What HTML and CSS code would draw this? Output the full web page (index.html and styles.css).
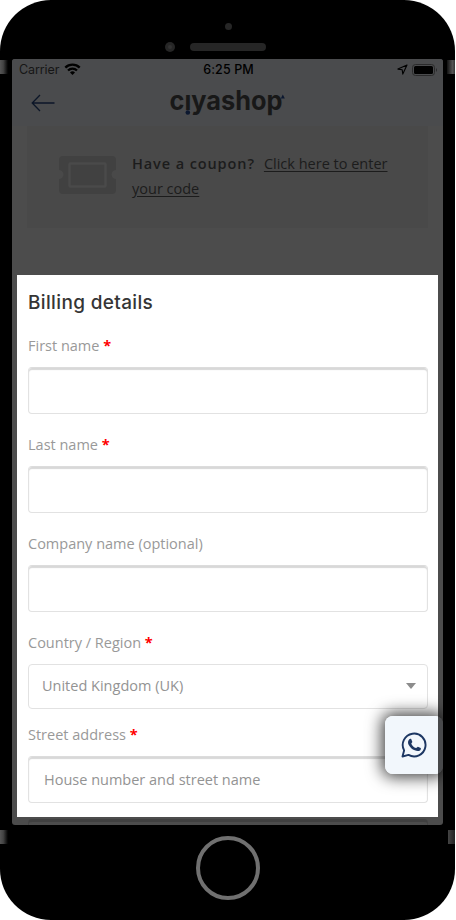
FILE: index.html
```html
<!DOCTYPE html>
<html lang="en">
<head>
<meta charset="utf-8">
<title>Billing details</title>
<link rel="stylesheet" href="styles.css">
</head>
<body>
<div class="phone">
  <i class="band band-tl"></i><i class="band band-tr"></i><i class="band band-bl"></i><i class="band band-br"></i>
  <div class="top">
    <svg width="455" height="59" viewBox="0 0 455 59">
      <circle cx="228.500" cy="26.500" r="3.500" fill="#262626"/>
      <circle cx="170" cy="47" r="5" fill="#262626"/><circle cx="170" cy="47" r="2" fill="#333"/>
      <rect x="190" y="43" width="76" height="8" rx="4" fill="#262626"/>
    </svg>
  </div>
  <div class="screen">
    <div class="status">
      <div class="carrier"><span>Carrier</span>
        <svg width="17" height="13" viewBox="0 0 17 13" fill="none" stroke="#000" stroke-width="2.300"><path d="M1.300 4.600a10.200 10.200 0 0 1 14.400 0M4 7.500a6.400 6.400 0 0 1 9 0"/><path d="M8.500 12 6 9.500a3.600 3.600 0 0 1 5 0z" fill="#000" stroke="none"/></svg>
      </div>
      <div class="time">6:25 PM</div>
      <div class="power">
        <svg width="11" height="11" viewBox="0 0 11 11" fill="none" stroke="#000" stroke-width="1.100" stroke-linejoin="round"><path d="M10 1 .9 5.100l4.300.6.6 4.400z"/></svg>
        <svg width="26" height="12" viewBox="0 0 26 12"><rect x=".5" y=".5" width="22" height="11" rx="3" fill="none" stroke="#2a2a2b"/><rect x="2" y="2" width="19" height="8" rx="1.500"/><path d="M24 4q2 2 0 4z" fill="#2a2a2b"/></svg>
      </div>
    </div>
    <div class="header">
      <svg class="back" width="24" height="18" viewBox="0 0 24 18" fill="none" stroke="#0c1628" stroke-width="1.300"><path d="M23.500 9H1.200M9 1 1.200 9 9 17"/></svg>
      <svg class="logo" width="122" height="46" viewBox="0 0 122 46">
        <text x=".5" y="29.500" textLength="113" lengthAdjust="spacingAndGlyphs" class="logo-text">cıyashop</text>
        <circle cx="18.800" cy="32.500" r="2.300" fill="#0c1830"/>
        <path d="m113.800 14.500 2 4h-4z" fill="#0c1830"/>
      </svg>
    </div>
    <div class="coupon">
      <svg class="ticket" width="57" height="38" viewBox="0 0 57 38"><path d="M4 0h49q4 0 4 4v10a4.500 4.500 0 0 0 0 9v11q0 4-4 4H4q-4 0-4-4V23a4.500 4.500 0 0 0 0-9V4q0-4 4-4z" fill="#414141"/><rect x="10.500" y="7.500" width="36" height="23" rx="1" fill="none" stroke="#4a4a4a" stroke-width="2.500"/></svg>
      <p><span class="ask">Have a coupon?</span><a>Click here to enter</a><br><a>your code</a></p>
    </div>
    <div class="panel">
      <h1>Billing details</h1>
      <div class="field"><label>First name <b>*</b></label><div class="input"></div></div>
      <div class="field"><label>Last name <b>*</b></label><div class="input"></div></div>
      <div class="field"><label>Company name (optional)</label><div class="input"></div></div>
      <div class="field country"><label>Country / Region <b>*</b></label><div class="select"><span>United Kingdom (UK)</span><i></i></div></div>
      <div class="field"><label>Street address <b>*</b></label><div class="input"><span class="street">House number and street name</span></div></div>
    </div>
    <div class="next"></div>
    <div class="chat">
      <svg width="26" height="26" viewBox="0 0 26 26"><path d="M1.500 24.500 3.100 18.400A11.400 11.400 0 1 1 7.500 22.900z" fill="none" stroke="#1d3763" stroke-width="1.900" stroke-linejoin="round"/><path d="M8.300 7.200C8.800 6.600 9.900 6.500 10.200 7L11.300 9.700C11.500 10.200 10.300 11.200 10.300 11.700C11.300 13.800 12.900 15.300 15 16C15.600 16.100 16.400 14.600 16.900 14.700L19.700 16C20.200 16.500 19.700 17.900 19 18.400C17.500 19.500 15.600 19.200 13.700 18.300C11.200 17.300 9 15.300 7.600 12.700C6.600 10.800 6.900 8.700 8.300 7.200Z" fill="#1d3763"/></svg>
    </div>
  </div>
  <div class="bottom"><div class="home"></div></div>
</div>
</body>
</html>
```
FILE: styles.css
```css
* { box-sizing: border-box; }
body { margin: 0; background: #fff; font-family: "Open Sans", "Noto Sans", sans-serif; }
svg { display: block; }
.phone { position: relative; width: 455px; height: 920px; background: #000; border-radius: 51px; }
.band { position: absolute; width: 8px; height: 14px; background: linear-gradient(90deg, #555, #444 40%, #000); }
.band-tl { left: 0; top: 60px; }
.band-tr { right: 0; top: 60px; background: linear-gradient(90deg, #111, #555 70%, #333); }
.band-bl { left: 0; top: 830px; }
.band-br { right: 0; top: 830px; width: 7px; background: linear-gradient(90deg, #444, #222); }
.screen { position: relative; width: 431px; height: 766px; margin-left: 12px; background: #4c4c4c; border-radius: 3px; overflow: hidden; }
.status { display: grid; grid-template-columns: 1fr auto 1fr; align-items: center; height: 21px; padding: 0 5px 0 7px; background: #4a4b4d; font-family: Inter, sans-serif; font-size: 12.5px; color: #000; }
.carrier { display: flex; align-items: center; gap: 5px; color: #161616; }
.carrier span { letter-spacing: -.1px; }
.time { font-weight: 500; letter-spacing: .1px; }
.power { display: flex; align-items: center; justify-content: flex-end; gap: 4px; }
.header { display: flex; align-items: center; gap: 114px; height: 46px; padding-left: 19px; background: #4a4b4d; }
.back { margin-top: -1px; }
.logo-text { font: 700 26.5px Inter, sans-serif; fill: #181818; }
.coupon { display: flex; align-items: flex-start; width: 401px; height: 102px; margin-left: 15px; padding: 24px 0 0 32px; background: #494949; }
.ticket { margin-top: 6px; }
.coupon p { margin: 1px 0 0 16px; font-size: 14.5px; line-height: 25px; color: #1c1c1c; white-space: nowrap; }
.ask { font-weight: 600; letter-spacing: .9px; margin-right: 9px; }
.coupon a { text-decoration: underline; text-underline-offset: 2px; }
.panel { width: 421px; height: 542px; margin: 47px 5px 0; padding: 13px 10px 0 11px; background: #fff; }
h1 { margin: 0 0 16px; font: 500 19px/30px Inter, sans-serif; letter-spacing: .35px; color: #353535; }
.field { margin-bottom: 19px; }
.country { margin-bottom: 14px; }
label { display: block; height: 22px; margin-bottom: 11px; font-size: 14.5px; line-height: 23px; color: #999; }
label b { color: #f00; }
.input, .select { width: 400px; border: 1px solid #e2e2e2; border-radius: 4px; font-size: 14.5px; color: #939393; display: flex; align-items: center; }
.input { height: 47px; box-shadow: inset 0 2px 1px #d8d8d8; border-top-color: #dcdcdc; padding-left: 15px; }
.select { height: 45px; padding: 0 11px 2px 13px; justify-content: space-between; }
.select i { border: 5px solid transparent; border-top: 6px solid #8c8c8c; border-bottom: 0; }
.next { width: 400px; height: 20px; margin: 2px 0 0 16px; border: 1px solid #434343; border-top: 3px solid #404040; border-radius: 4px; }
.chat { position: absolute; left: 373px; top: 657px; width: 58px; height: 58px; padding: 16px; border-radius: 8px; background: linear-gradient(90deg, #f2f7fc 53px, #48494b 53px); box-shadow: 0 0 16px 3px rgba(0, 0, 0, .75); }
.bottom { display: flex; justify-content: center; padding: 11px 0 0 1px; }
.home { width: 64px; height: 64px; border: 4px solid #707070; border-radius: 50%; }
```
